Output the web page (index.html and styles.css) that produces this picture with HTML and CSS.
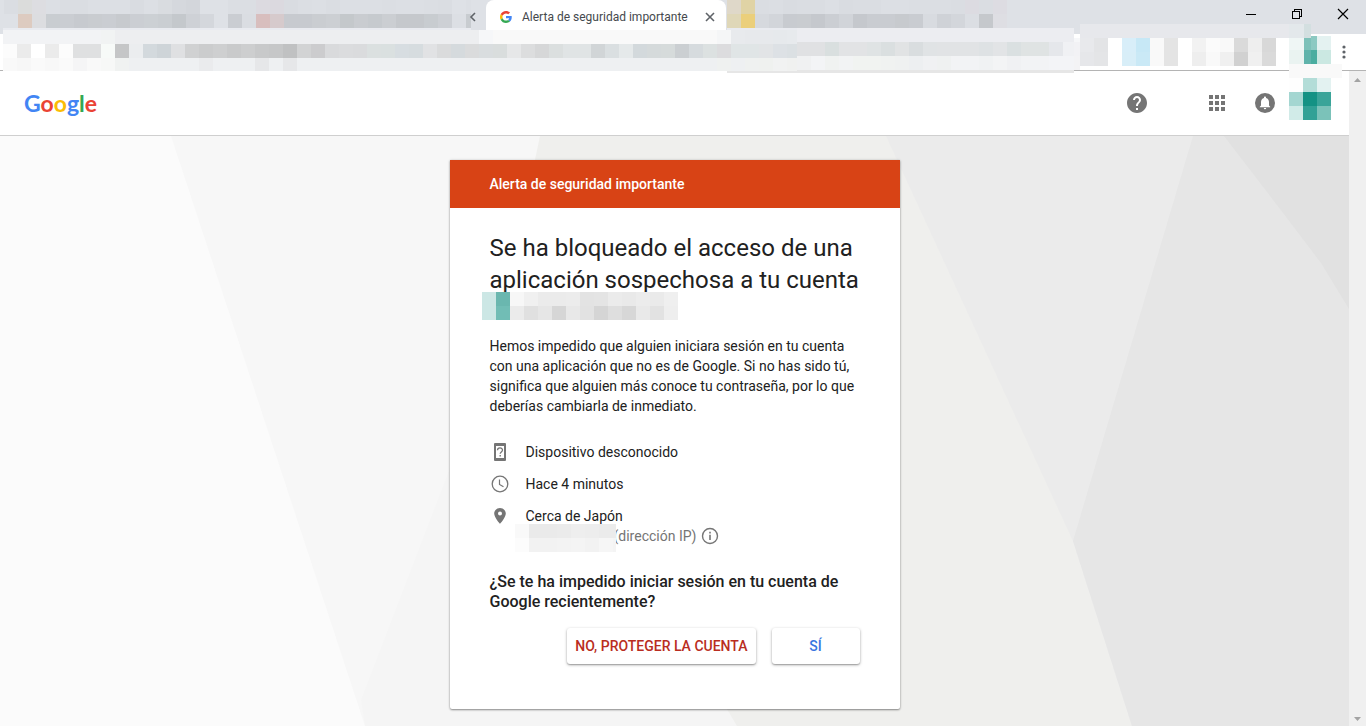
FILE: index.html
```html
<!DOCTYPE html>
<html lang="es">
<head>
<meta charset="utf-8">
<meta name="viewport" content="width=device-width, initial-scale=1">
<title>Alerta de seguridad importante</title>
<link rel="stylesheet" href="styles.css">
</head>
<body>
<div class="browser">
  <div class="tabstrip">
    <button class="strip-button" aria-label="Anterior"><svg width="8" height="12" viewBox="0 0 8 12"><path d="M6 2L2 6l4 4" fill="none" stroke="#5f6368" stroke-width="1.6"/></svg></button>
    <div class="tab">
      <svg class="favicon" width="12" height="12" viewBox="0 0 48 48"><path fill="#EA4335" d="M24 9.5c3.54 0 6.71 1.22 9.21 3.6l6.85-6.85C35.9 2.38 30.47 0 24 0 14.62 0 6.51 5.38 2.56 13.22l7.98 6.19C12.43 13.72 17.74 9.5 24 9.5z"/><path fill="#4285F4" d="M46.98 24.55c0-1.57-.15-3.09-.38-4.55H24v9.02h12.94c-.58 2.96-2.26 5.48-4.78 7.18l7.73 6c4.51-4.18 7.09-10.36 7.09-17.65z"/><path fill="#FBBC05" d="M10.53 28.59c-.48-1.45-.76-2.99-.76-4.59s.27-3.14.76-4.59l-7.98-6.19C.92 16.46 0 20.12 0 24c0 3.88.92 7.54 2.56 10.78l7.97-6.19z"/><path fill="#34A853" d="M24 48c6.48 0 11.93-2.13 15.89-5.81l-7.73-6c-2.15 1.45-4.92 2.3-8.16 2.3-6.26 0-11.57-4.22-13.47-9.91l-7.98 6.19C6.51 42.62 14.62 48 24 48z"/></svg>
      <span class="tab-title">Alerta de seguridad importante</span>
      <button class="strip-button" aria-label="Cerrar pestaña"><svg width="10" height="10" viewBox="0 0 10 10"><path d="M1 1l8 8M9 1L1 9" stroke="#5f6368" stroke-width="1.6"/></svg></button>
    </div>
    <div class="window-controls">
      <button class="strip-button" aria-label="Minimizar"><svg width="12" height="12" viewBox="0 0 12 12" shape-rendering="crispEdges"><path d="M1 6h10v1H1z"/></svg></button>
      <button class="strip-button" aria-label="Restaurar"><svg width="12" height="12" viewBox="0 0 12 12" fill="none" stroke="#000" shape-rendering="crispEdges"><path d="M1.5 3.5h7v7h-7zM3.5 3.5v-2h7v7h-2"/></svg></button>
      <button class="strip-button" aria-label="Cerrar"><svg width="12" height="12" viewBox="0 0 12 12"><path d="M1 1l10 10M11 1L1 11" stroke="#000" stroke-width="1.2"/></svg></button>
    </div>
  </div>
  <div class="toolbar">
    <button class="strip-button" aria-label="Menú"><svg width="4" height="14" viewBox="0 0 4 14" fill="#5f6368"><circle cx="2" cy="2" r="1.6"/><circle cx="2" cy="7" r="1.6"/><circle cx="2" cy="12" r="1.6"/></svg></button>
  </div>
  <svg class="mosaic mosaic-tabs-left" data-mosaic="tabsLeft"></svg>
  <svg class="mosaic mosaic-tabs-right" data-mosaic="tabsRight"></svg>
  <svg class="mosaic mosaic-address" data-mosaic="address"></svg>
  <svg class="mosaic mosaic-address-end" data-mosaic="addressEnd"></svg>
  <svg class="mosaic mosaic-extensions" data-mosaic="extensions"></svg>
  <svg class="mosaic mosaic-profile" data-mosaic="profile"></svg>
</div>
<div class="viewport">
  <div class="page">
    <header class="header">
      <a class="logo" href="#" aria-label="Google"><span class="blue">G</span><span class="red">o</span><span class="yellow">o</span><span class="blue">g</span><span class="green">l</span><span class="red">e</span></a>
      <button class="icon-button help" aria-label="Ayuda"><svg width="24" height="24" viewBox="0 0 24 24"><path d="M12 2C6.48 2 2 6.48 2 12s4.48 10 10 10 10-4.48 10-10S17.52 2 12 2zm1 17h-2v-2h2v2zm2.07-7.75l-.9.92C13.45 12.9 13 13.5 13 15h-2v-.5c0-1.1.45-2.1 1.17-2.83l1.24-1.26c.37-.36.59-.86.59-1.41 0-1.1-.9-2-2-2s-2 .9-2 2H8c0-2.21 1.79-4 4-4s4 1.79 4 4c0 .88-.36 1.68-.93 2.25z"/></svg></button>
      <button class="icon-button" aria-label="Aplicaciones"><svg width="24" height="24" viewBox="0 0 24 24"><path d="M4 8h4V4H4v4zm6 12h4v-4h-4v4zm-6 0h4v-4H4v4zm0-6h4v-4H4v4zm6 0h4v-4h-4v4zm6-10v4h4V4h-4zm-6 4h4V4h-4v4zm6 6h4v-4h-4v4zm0 6h4v-4h-4v4z"/></svg></button>
      <button class="icon-button" aria-label="Notificaciones"><svg width="24" height="24" viewBox="0 0 24 24"><circle cx="12" cy="12" r="10"/><path fill="#fff" d="M12 5.500c-.6 0-1 .4-1 1v.4c-1.900.5-3 2.100-3 4.100v3.500L6.800 15.700v.6h10.400v-.6L16 14.500V11c0-2-1.100-3.600-3-4.100v-.4c0-.6-.4-1-1-1zM10.800 17a1.200 1.200 0 0 0 2.400 0z"/></svg></button>
      <svg class="avatar" data-mosaic="avatar"></svg>
    </header>
    <main class="main">
      <svg class="backdrop" viewBox="0 0 1349 590" preserveAspectRatio="none" aria-hidden="true">
        <path fill="#fbfbfb" d="M0 0h1349v590H0z"/>
        <path fill="#f7f7f7" d="M171 0h700v590H365z"/>
        <path fill="#f5f5f5" d="M361 564L450 332 600 200 760 590H365z"/>
        <path fill="#ebebeb" d="M880 0h320l-60 590h-60z"/>
        <path fill="#efefed" d="M540 0h346l187 405 59 185H737L500 190z"/>
        <path fill="#e6e6e6" d="M1193 0h156v590h-217l-59-185z"/>
        <path fill="#e1e1e1" d="M1224 0h125v173l-28-46-41-54z"/>
      </svg>
      <article class="card">
        <div class="card-banner">Alerta de seguridad importante</div>
        <div class="card-body">
          <h1 class="title">Se ha bloqueado el acceso de una aplicación sospechosa a tu cuenta</h1>
          <div class="account"><svg class="mosaic mosaic-account" data-mosaic="account"></svg></div>
          <p class="text">Hemos impedido que alguien iniciara sesión en tu cuenta con una aplicación que no es de Google. Si no has sido tú, significa que alguien más conoce tu contraseña, por lo que deberías cambiarla de inmediato.</p>
          <ul class="details">
            <li class="detail"><svg class="detail-icon" width="20" height="20" viewBox="0 0 20 20"><path fill-rule="evenodd" d="M5 1h10q1 0 1 1v16q0 1-1 1H5q-1 0-1-1V2q0-1 1-1zm1 3v12h8V4z"/><path d="M7.500 8.300c0-3.300 5-3.200 5-.2 0 1.900-2.300 1.900-2.300 3.700" fill="none" stroke="currentColor" stroke-width="1.300"/><path d="M9.500 13h1.400v1.400H9.500z"/></svg>
              <div>Dispositivo desconocido</div></li>
            <li class="detail"><svg class="detail-icon detail-icon-line" width="20" height="20" viewBox="0 0 20 20" stroke="currentColor"><circle cx="10" cy="10" r="7.800" stroke-width="1.300"/><path d="M9.500 5.500v5l4 2.300" stroke-width="1.200"/></svg>
              <div>Hace 4 minutos</div></li>
            <li class="detail"><svg class="detail-icon" width="20" height="20" viewBox="0 0 20 20"><path d="M10 2C6.700 2 4.200 4.500 4.200 7.600c0 4 5.800 10.400 5.800 10.400s5.800-6.400 5.800-10.400C15.800 4.500 13.300 2 10 2zm0 7.600a2 2 0 1 1 0-4 2 2 0 0 1 0 4z"/></svg>
              <div>Cerca de Japón
                <div class="address"><svg class="mosaic mosaic-ip" data-mosaic="ip"></svg><span>(dirección IP)</span>
                <button class="info" aria-label="Más información"><svg width="18" height="18" viewBox="0 0 18 18"><circle cx="9" cy="9" r="7.500" fill="none" stroke="currentColor" stroke-width="1.400"/><path d="M8.200 4.800h1.600v1.600H8.200zM8.200 7.800h1.600v5.200H8.200z" fill="currentColor"/></svg></button></div>
              </div></li>
          </ul>
          <h2 class="question">¿Se te ha impedido iniciar sesión en tu cuenta de Google recientemente?</h2>
          <div class="actions">
            <button class="action action-no">NO, PROTEGER LA CUENTA</button>
            <button class="action action-yes">SÍ</button>
          </div>
        </div>
      </article>
    </main>
  </div>
  <div class="scrollbar" aria-hidden="true">
    <svg width="7" height="4" viewBox="0 0 7 4"><path d="M0 4L3.500 0 7 4z" fill="#a3a3a3"/></svg>
    <svg width="7" height="4" viewBox="0 0 7 4"><path d="M0 0h7L3.500 4z" fill="#a3a3a3"/></svg>
  </div>
</div>
<script src="script.js"></script>
</body>
</html>
```

FILE: styles.css
```css
* { box-sizing: border-box; }
body {
  margin: 0;
  min-height: 100vh;
  display: flex;
  flex-direction: column;
  font: 14px/20px Roboto, sans-serif;
  color: #212121;
  background: #fff;
}
button { border: 0; padding: 0; background: none; font: inherit; color: inherit; cursor: pointer; }
svg { display: block; }

.browser { position: relative; border-bottom: 1px solid #b4b4b4; }
.tabstrip { display: flex; height: 34px; padding-left: 468px; background: #dee1e6; }
.strip-button { display: flex; align-items: center; justify-content: center; }
.tabstrip > .strip-button { position: relative; z-index: 1; width: 10px; margin-right: 8px; }
.tab {
  display: flex;
  align-items: center;
  width: 240px;
  padding: 0 11px 0 14px;
  background: #fff;
  border-radius: 8px 8px 0 0;
}
.tab-title { flex: 1; margin-left: 10px; font: 12px/16px Roboto, sans-serif; color: #45494d; white-space: nowrap; }
.window-controls { display: flex; margin-left: auto; height: 28px; }
.window-controls .strip-button { width: 46px; }
.toolbar { display: flex; justify-content: flex-end; height: 36px; padding-right: 20px; }

.mosaic { position: absolute; }
.mosaic-tabs-left { left: 4px; top: 0; }
.mosaic-tabs-right { left: 727px; top: 0; }
.mosaic-address { left: 3px; top: 28px; }
.mosaic-address-end { left: 797px; top: 28px; }
.mosaic-extensions { right: 62px; top: 24px; }
.mosaic-profile { right: 24px; top: 24px; }

.viewport { flex: 1; display: flex; }
.page { flex: 1; display: flex; flex-direction: column; min-width: 0; }
.scrollbar {
  display: flex;
  flex-direction: column;
  justify-content: space-between;
  align-items: center;
  width: 17px;
  padding: 7px 0 5px;
  background: #f0f0f0;
}

.header {
  display: flex;
  align-items: center;
  height: 65px;
  padding: 0 18px 0 24px;
  border-bottom: 1px solid #cfcfcf;
}
.logo { margin-right: auto; font: 700 23px/32px Lato, sans-serif; text-decoration: none; }
.blue { color: #4285f4; }
.red { color: #ea4335; }
.yellow { color: #fbbc05; }
.green { color: #34a853; }
.icon-button { width: 24px; margin-right: 24px; }
.icon-button svg { fill: #757575; }
.help { margin-right: 56px; }
.icon-button:last-of-type { margin-right: 12px; }
.avatar { align-self: flex-start; margin-top: 7px; }

.main { position: relative; flex: 1; padding: 24px 0 17px; }
.backdrop { position: absolute; inset: 0; width: 100%; height: 100%; }
.card {
  position: relative;
  width: 450px;
  max-width: 100%;
  margin: 0 auto;
  background: #fff;
  border-radius: 0 0 2px 2px;
  box-shadow: 0 1px 2px rgba(0, 0, 0, .4), 0 0 3px rgba(0, 0, 0, .15);
}
.card-banner { padding: 14px 40px; background: #d84315; color: #fff; font-weight: 500; }
.card-body { padding: 24px 40px 45px; }
.title { margin: 0; font-size: 24px; line-height: 32px; font-weight: 400; }
.account { position: relative; height: 32px; }
.mosaic-account { left: -8px; top: -4px; }
.text { margin: 8px 0 26px; }
.details { display: grid; gap: 12px; margin: 0; padding: 0; list-style: none; }
.detail { display: flex; gap: 16px; }
.detail-icon { flex: none; color: #757575; fill: #757575; }
.detail-icon-line { fill: none; }
.address { position: relative; display: flex; align-items: center; gap: 5px; height: 20px; padding-left: 88px; color: #757575; }
.mosaic-ip { left: -11px; top: -2px; }
.question { margin: 26px 0 16px; font-size: 16px; line-height: 20px; font-weight: 500; }
.actions { display: flex; justify-content: flex-end; gap: 16px; }
.action {
  min-width: 88px;
  height: 36px;
  padding: 0 8px;
  border-radius: 3px;
  background: #fff;
  font-weight: 500;
  box-shadow: 0 1px 3px rgba(0, 0, 0, .35), 0 1px 1px rgba(0, 0, 0, .15);
}
.action-no { color: #b92d21; }
.action-yes { color: #3a76e0; }
```

FILE: script.js
```js
// Pixelated blocks that hide private data. Each row is [height, colours];
// "colour*n" repeats a 14px cell n times, "colour:w" makes a cell w pixels wide.
const CELL = 14;
const MOSAICS = {
  tabsLeft: [
    [14, "dadde2 dbdcdb dddde1 dcdfe4 dadde2*2 dcdfe4*3 d9dce1 dcdfe4 d9dce0 d5d8dd d3d6db dee1e6*2 dbdee3*2 dcdae0 dbd9df d9dce1 dbdee3 dcdfe4 dadde2 dcdfe4*3 dbdee3 dcdfe4*2 dbdee3 dadde2 dee1e6 dcdfe4:5"],
    [14, "dee1e6 ddcbc0 dcdde0 c9cdd1 cacdd2 c7cacf c9ccd0 cacdd2 c7cace cbced3 ccd0d4 caced2 c4c8cc ced1d6 d4d7dc dee1e6 cacdd2 dadde2 d8bebe d6cacc c7cacf*2 cacdd1 cccfd3 c4c8cb c9ccd0 c6cace cbced2 c5c8cc*2 c8ccd0 cdd0d5 dcdfe4 c8ccd0:5"]
  ],
  tabsRight: [
    [14, "dfd8c9 e0d3a5 dadde2 dbdee3 d9dce1 dadde2*2 dcdfe4 d9dce1 dadde2*2 dcdfe4*2 dbdee3*3 dadde2 dcdbe1 dadde2 dddce2"],
    [14, "dfd7b8 ebcf7b d6d9de d2d5da c8cbd0 c9ccd0 c5c8cd cbced3 d1d4d9 c5c8cd c9ccd1*2 c7cace c9ccd1 d8dbe0 cfd2d7 d3d6db dbdee3 c5c8cc dedee3"]
  ],
  address: [
    [2, "e9ebf0*33 e9ebf0:6 ffffff00:256 e9ebf0:70"],
    [14, "f2f3f5*7 f1f3f3 edeef0*26 f6f7f9 f9f9f9*16 f5f6f7 e8eaed e7e9ec*2 e6e9ec e7eaed:10"],
    [14, "fcfcfc ebebeb ffffff ebebeb fcfcfc dfe0e1*2 f7faf8 c5c6c7 ebedef d3d9dd ced4d8 dfe0e2 d0d1d2 cbcccd cecfd0 c9cacb cdcecf c8c9ca c6c7c8 c0c1c2 d2d3d4 ccccce d9dadc dbdcde dadbdd dbe0e0 dae0e0 d7dde1 d6dcdf e1e2e4 dadbdc d5dadd dadbdc d9dddf d9dddd e6e7e8 dcddde d6d7d8 dbdfdf e0e4e5*2 d1d5d7 dadfe1 e5e9ea d3d9dc d5dadb d6dbdb cbcfd2 d6dbde dce1e1 dcdcde e0e5e6*2 e2e4e6 dde1e5 dbe0e3:10"],
    [13, "f9f9f9 f7f7f7 fafafa f8f8f8 fafafa f5f5f6 f9f9f9 f7f8f7 f0f2f1 eef0f2*5 eaebed eef0f2*3 e6e7e9 eef0f2 e6e7e9 eef0f2*30 eff1f0 eef0f2 eff1f0 eff1ef f1f2f2 f0f1f0:10"],
    [2, "ffffff00:724 e6e6e6:70"]
  ],
  addressEnd: [
    [10, "ecedf1:277"],
    [4, "ecedf1:277 f6f7f9:6"],
    [14, "e0e1e3*2 d9dfdf e2e3e5*2 dfe3e4 dadfe0 e1e3e4 d9dddf e0e3e5 e1e3e5*3 dee2e4 e2e4e6 dae0e1 dfe3e3*2 e5e7eb f0f1f4:11 f2f2f5:6"],
    [14, "f0f1f2 f3f4f6 f0f2f1 f2f3f4 f1f3f1*2 f0f2f1 eff1f1 edeff1 f0f1f3 eff1f1 f2f3f5*2 f0f2f3 f3f4f5 f0f1f3 f2f3f5*2 f3f4f7 f3f4f7:11 f3f3f5:6"],
    [3, "e6e6e6:277"]
  ],
  extensions: [
    [14, "e7e8ec:209 e3e8eb:15"],
    [14, "e8e9ec e3e4e6 ffffff d8eef9 c7e8f6 f9f9f9 e4e4e4 ffffff f2f2f2 fbfbfb f9f9f9 dadada eeeeee d8d8d8 ffffff"],
    [14, "e6e7ea e4e5e7 ffffff d8eef8 cae9f6 f9f9f9 e4e4e4 ffffff eeeeee f9f9f9 f0f0f0 d1d1d1 f0f0f0 dadada ffffff"]
  ],
  profile: [
    [12, "e3e8eb:15 d3dfe0:7"],
    [2, "e3e8eb:15 d3dfe0:7 8cc9c2:6 e4f2f1"],
    [12, "eff6f5:15 7dc1b9:7 8cc9c2:6 e4f2f1"],
    [14, "eaf3f1:15 5fb3ab:7 4aada0:6 cbe8e2"],
    [14, "f9f9f9:53"]
  ],
  avatar: [
    [14, "fefefe b3ddd8 e3f2f1"],
    [14, "a4d6d1 149284 3aa499"],
    [14, "d1ebe8 32a196 7bc2b9"]
  ],
  account: [
    [14, "cce7e5 6ab7af f7f7f7 f0f0f0 ebebeb*2 ececec e3e3e3 e4e4e4 ebebeb e9e9e9 ececec eaeaea efefef"],
    [14, "cce7e5 71bdb5 ebebeb e0e0e0 e6e6e6 d6d6d6 e8e8e8 e2e2e2 d5d5d5 dedede d7d7d7 e9e9e9 e2e2e2 eeeeee"]
  ],
  ip: [
    [14, "f9f9f9 eaeaea*2 ebebeb eeeeee ededed ebebeb ebebeb:3"],
    [14, "fcfcfc f2f2f2*2 f3f3f3 f4f4f4 f2f2f2 f6f6f6 f4f4f4:3"]
  ]
};

document.querySelectorAll("[data-mosaic]").forEach(svg => {
  let y = 0, width = 0, rects = "";
  for (const [height, cells] of MOSAICS[svg.dataset.mosaic]) {
    let x = 0;
    for (const cell of cells.split(" ")) {
      const colour = cell.split(/[*:]/)[0];
      const size = Number(cell.split(":")[1] || CELL * Number(cell.split("*")[1] || 1));
      rects += `<rect x="${x}" y="${y}" width="${size}" height="${height}" fill="#${colour}"/>`;
      x += size;
    }
    width = Math.max(width, x);
    y += height;
  }
  svg.setAttribute("width", width);
  svg.setAttribute("height", y);
  svg.setAttribute("shape-rendering", "crispEdges");
  svg.setAttribute("aria-hidden", "true");
  svg.innerHTML = rects;
});
```
